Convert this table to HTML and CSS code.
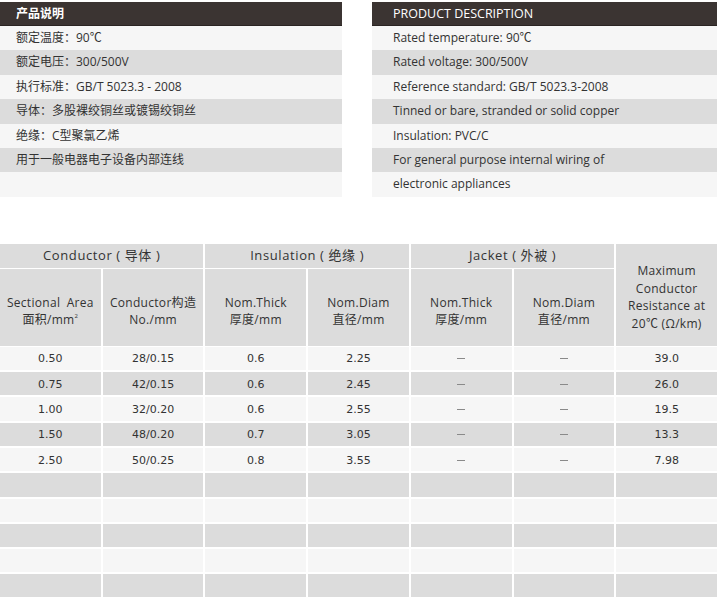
FILE: index.html
```html
<!DOCTYPE html>
<html lang="zh">
<head>
<meta charset="utf-8">
<title>产品说明</title>
<link rel="stylesheet" href="styles.css">
</head>
<body>
<div class="top">
  <section class="panel panel-cn">
    <div class="panel-head">产品说明</div>
    <div class="row">额定温度：90℃</div>
    <div class="row alt">额定电压：300/500V</div>
    <div class="row">执行标准：GB/T 5023.3 - 2008</div>
    <div class="row alt">导体：多股裸绞铜丝或镀锡绞铜丝</div>
    <div class="row">绝缘：C型聚氯乙烯</div>
    <div class="row alt">用于一般电器电子设备内部连线</div>
    <div class="row"></div>
  </section>
  <section class="panel panel-en">
    <div class="panel-head">PRODUCT DESCRIPTION</div>
    <div class="row">Rated temperature: 90℃</div>
    <div class="row alt">Rated voltage: 300/500V</div>
    <div class="row">Reference standard: GB/T 5023.3-2008</div>
    <div class="row alt">Tinned or bare, stranded or solid copper</div>
    <div class="row">Insulation: PVC/C</div>
    <div class="row alt">For general purpose internal wiring of</div>
    <div class="row">electronic appliances</div>
  </section>
</div>

<div class="spec">
  <div class="thead">
    <div class="th group g-cond">Conductor ( 导体 )</div>
    <div class="th group g-ins">Insulation ( 绝缘 )</div>
    <div class="th group g-jac">Jacket ( 外被 )</div>
    <div class="th res"><span class="lbl">Maximum<br>Conductor<br>Resistance at<br>20℃ (Ω/km)</span></div>
    <div class="th sub"><span class="lbl"><span class="wide">Sectional Area</span><br>面积/mm<sup>2</sup></span></div>
    <div class="th sub"><span class="lbl">Conductor构造<br>No./mm</span></div>
    <div class="th sub"><span class="lbl">Nom.Thick<br>厚度/mm</span></div>
    <div class="th sub"><span class="lbl">Nom.Diam<br>直径/mm</span></div>
    <div class="th sub"><span class="lbl">Nom.Thick<br>厚度/mm</span></div>
    <div class="th sub"><span class="lbl">Nom.Diam<br>直径/mm</span></div>
  </div>
  <div class="tbody">
    <div class="td">0.50</div><div class="td">28/0.15</div><div class="td">0.6</div><div class="td">2.25</div><div class="td"><span class="dash"></span></div><div class="td"><span class="dash"></span></div><div class="td">39.0</div>
    <div class="td alt">0.75</div><div class="td alt">42/0.15</div><div class="td alt">0.6</div><div class="td alt">2.45</div><div class="td alt"><span class="dash"></span></div><div class="td alt"><span class="dash"></span></div><div class="td alt">26.0</div>
    <div class="td">1.00</div><div class="td">32/0.20</div><div class="td">0.6</div><div class="td">2.55</div><div class="td"><span class="dash"></span></div><div class="td"><span class="dash"></span></div><div class="td">19.5</div>
    <div class="td alt">1.50</div><div class="td alt">48/0.20</div><div class="td alt">0.7</div><div class="td alt">3.05</div><div class="td alt"><span class="dash"></span></div><div class="td alt"><span class="dash"></span></div><div class="td alt">13.3</div>
    <div class="td">2.50</div><div class="td">50/0.25</div><div class="td">0.8</div><div class="td">3.55</div><div class="td"><span class="dash"></span></div><div class="td"><span class="dash"></span></div><div class="td">7.98</div>
    <div class="td alt"></div><div class="td alt"></div><div class="td alt"></div><div class="td alt"></div><div class="td alt"></div><div class="td alt"></div><div class="td alt"></div>
    <div class="td"></div><div class="td"></div><div class="td"></div><div class="td"></div><div class="td"></div><div class="td"></div><div class="td"></div>
    <div class="td alt"></div><div class="td alt"></div><div class="td alt"></div><div class="td alt"></div><div class="td alt"></div><div class="td alt"></div><div class="td alt"></div>
    <div class="td"></div><div class="td"></div><div class="td"></div><div class="td"></div><div class="td"></div><div class="td"></div><div class="td"></div>
    <div class="td alt"></div><div class="td alt"></div><div class="td alt"></div><div class="td alt"></div><div class="td alt"></div><div class="td alt"></div><div class="td alt"></div>
  </div>
</div>
</body>
</html>
```

FILE: styles.css
```css
html, body {
  margin: 0;
  padding: 0;
  background: #ffffff;
  width: 717px;
  overflow: hidden;
}

body {
  font-family: "Open Sans", "Noto Sans CJK SC", sans-serif;
  color: #333333;
}

.top {
  display: flex;
  gap: 30px;
  padding-top: 2px;
}

.panel-cn {
  width: 342px;
}

.panel-en {
  flex: 1;
}

.panel-head {
  height: 23px;
  line-height: 23px;
  background: #3b3432;
  color: #ffffff;
  font-size: 12px;
  font-weight: 600;
  padding-left: 16px;
  border-bottom: 1px solid #2a2422;
}

.panel-en .panel-head {
  padding-left: 21px;
  font-size: 12.5px;
  font-weight: 500;
}

.row {
  height: 24.4px;
  line-height: 24.4px;
  font-size: 12px;
  background: #f6f6f6;
  padding-left: 16px;
  white-space: nowrap;
}

.panel-en .row {
  padding-left: 21px;
}

.row.alt {
  background: #dcdcdc;
}

.spec {
  margin-top: 47px;
}

.thead {
  display: grid;
  grid-template-columns: repeat(7, 1fr);
  grid-template-rows: 24px 77px;
  column-gap: 2px;
  row-gap: 1px;
  margin-bottom: 1px;
}

.th {
  background: #dcdcdc;
  display: flex;
  align-items: center;
  justify-content: center;
  text-align: center;
  font-size: 12px;
  line-height: 17.5px;
  color: #333333;
}

.lbl {
  display: block;
}

.group {
  font-size: 13px;
  letter-spacing: 0.6px;
}

.g-cond { grid-column: 1 / 3; grid-row: 1; }
.g-ins { grid-column: 3 / 5; grid-row: 1; }
.g-jac { grid-column: 5 / 7; grid-row: 1; }
.res { grid-column: 7; grid-row: 1 / 3; letter-spacing: 0.3px; padding-top: 5px; }

.sub {
  grid-row: 2;
  letter-spacing: 0.3px;
  padding-top: 8px;
}

.wide {
  word-spacing: 3px;
}

.sub sup {
  font-size: 6px;
  vertical-align: top;
  line-height: 10px;
}

.tbody {
  display: grid;
  grid-template-columns: repeat(7, 1fr);
  grid-auto-rows: 23.3px;
  column-gap: 2px;
  row-gap: 2px;
}

.td {
  background: #f6f6f6;
  display: flex;
  align-items: center;
  justify-content: center;
  font-family: "DejaVu Sans", sans-serif;
  font-size: 11px;
  color: #333333;
  padding-top: 1px;
}

.td.alt {
  background: #dcdcdc;
}

.dash {
  display: block;
  width: 8px;
  height: 1px;
  background: #8a8a8a;
}
```
